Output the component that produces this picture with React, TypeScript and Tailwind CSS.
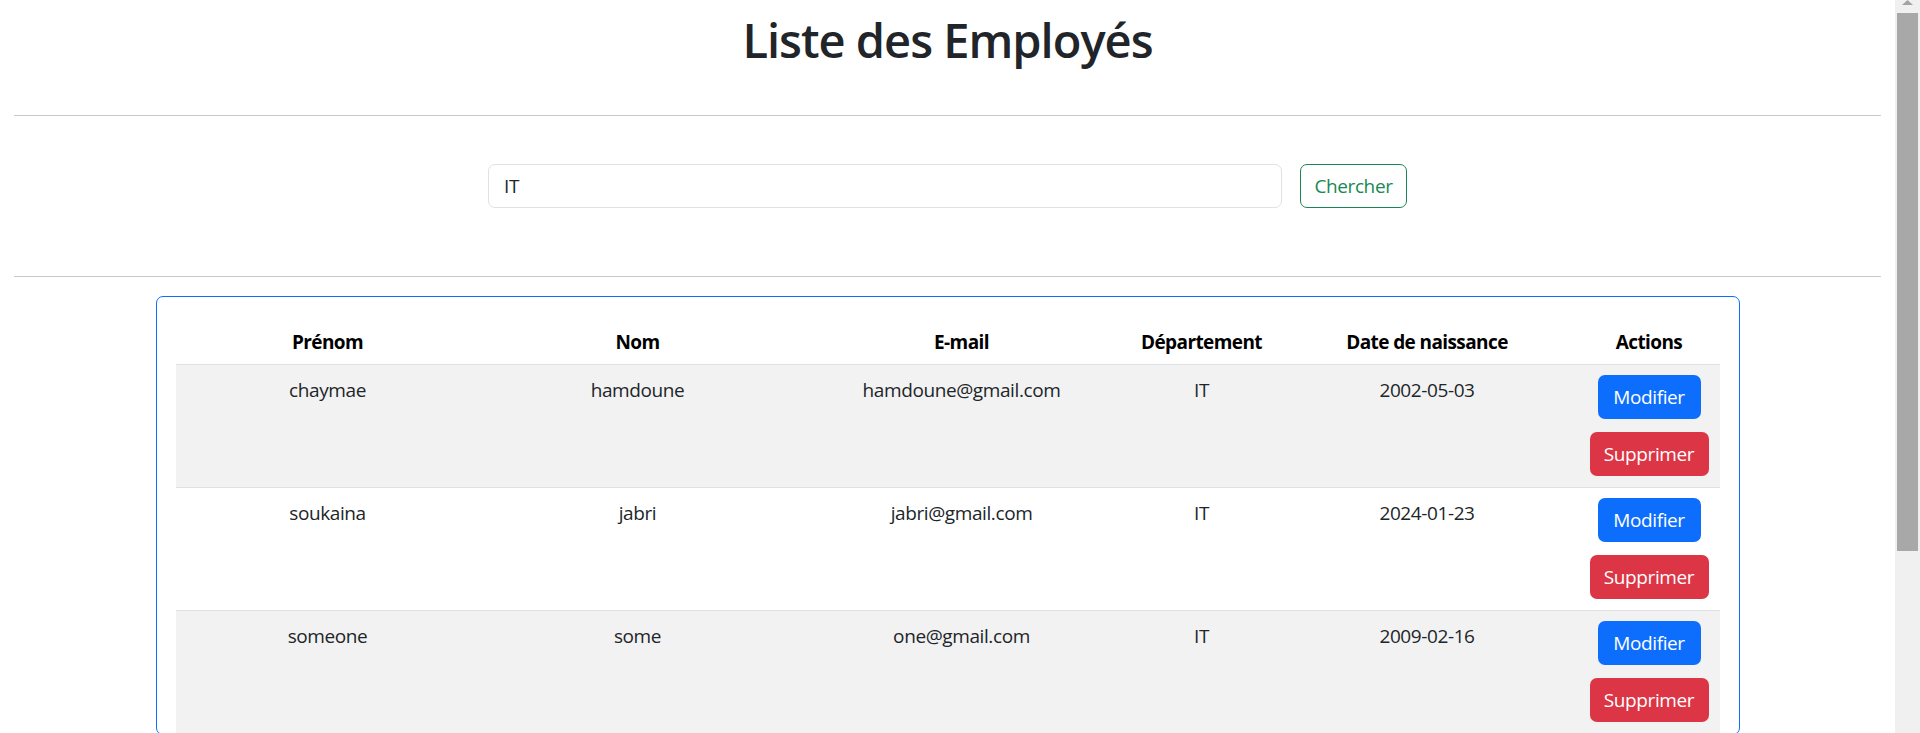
import React from "react";

const employees = [
  { prenom: "chaymae", nom: "hamdoune", email: "hamdoune@gmail.com", dep: "IT", date: "2002-05-03" },
  { prenom: "soukaina", nom: "jabri", email: "jabri@gmail.com", dep: "IT", date: "2024-01-23" },
  { prenom: "someone", nom: "some", email: "one@gmail.com", dep: "IT", date: "2009-02-16" },
];

const headers = ["Prénom", "Nom", "E-mail", "Département", "Date de naissance", "Actions"];
const widths = [304, 316, 332, 148, 303, 141];

export default function App() {
  return (
    <div className="flex h-[733px] w-full overflow-hidden bg-white font-['Open_Sans',_sans-serif] text-[#212529]">
      <div className="min-w-0 flex-1">
        <h1 className="h-[70px] pt-[10px] text-center text-[47px] font-semibold leading-[60px] tracking-[-1px] text-[#212529]">
          Liste des Employés
        </h1>
        <hr className="mx-[14px] mt-[45px] border-[#c8c9ca]" />
        <div className="mt-[48px] flex justify-center gap-[18px]">
          <input
            defaultValue="IT"
            readOnly
            className="h-[44px] w-[794px] rounded-[7px] border border-[#dee2e6] px-[15px] text-[19px] tracking-[-0.4px] text-[#212529] outline-none"
          />
          <button className="h-[44px] w-[107px] rounded-[7px] border border-[#198754] text-[19px] tracking-[-0.4px] text-[#198754]">
            Chercher
          </button>
        </div>
        <hr className="mx-[14px] mt-[68px] border-[#c8c9ca]" />
        <div className="mx-auto mt-[19px] w-[1584px] rounded-[7px] border border-[#0d6efd] px-[19px] pt-[16px]">
          <table className="w-full table-fixed border-collapse text-center">
            <colgroup>
              {widths.map((w, i) => (
                <col key={i} style={{ width: w }} />
              ))}
            </colgroup>
            <thead>
              <tr>
                {headers.map((h) => (
                  <th
                    key={h}
                    className="border-b border-[#dee2e6] pt-[15px] pb-[8px] text-[19px] font-bold leading-[28px] tracking-[-0.6px] text-black"
                  >
                    {h}
                  </th>
                ))}
              </tr>
            </thead>
            <tbody>
              {employees.map((e, i) => (
                <tr key={e.email} className={i % 2 === 0 ? "bg-[#f2f2f2]" : "bg-white"}>
                  {[e.prenom, e.nom, e.email, e.dep, e.date].map((v, j) => (
                    <td
                      key={j}
                      className="border-b border-[#dee2e6] pt-[10px] pb-[11px] align-top text-[19px] leading-[30px] tracking-[-0.4px] text-[#212529]"
                    >
                      {v}
                    </td>
                  ))}
                  <td className="border-b border-[#dee2e6] pt-[10px] pb-[11px] align-top">
                    <div className="flex flex-col items-center gap-[13px]">
                      <button className="h-[44px] w-[103px] rounded-[7px] bg-[#0d6efd] text-[19px] tracking-[-0.4px] text-white">
                        Modifier
                      </button>
                      <button className="h-[44px] w-[119px] rounded-[7px] bg-[#dc3545] text-[19px] tracking-[-0.4px] text-white">
                        Supprimer
                      </button>
                    </div>
                  </td>
                </tr>
              ))}
            </tbody>
          </table>
        </div>
      </div>
      <div className="flex h-full w-[25px] flex-col bg-[#f0f0f0] px-[2px]">
        <div className="flex h-[13px] items-start justify-center">
          <svg width="11" height="5" viewBox="0 0 11 5">
            <polygon points="5.5,0 11,5 0,5" fill="#a3a3a3" />
          </svg>
        </div>
        <div className="h-[538px] bg-[#a8a8a8]" />
      </div>
    </div>
  );
}
